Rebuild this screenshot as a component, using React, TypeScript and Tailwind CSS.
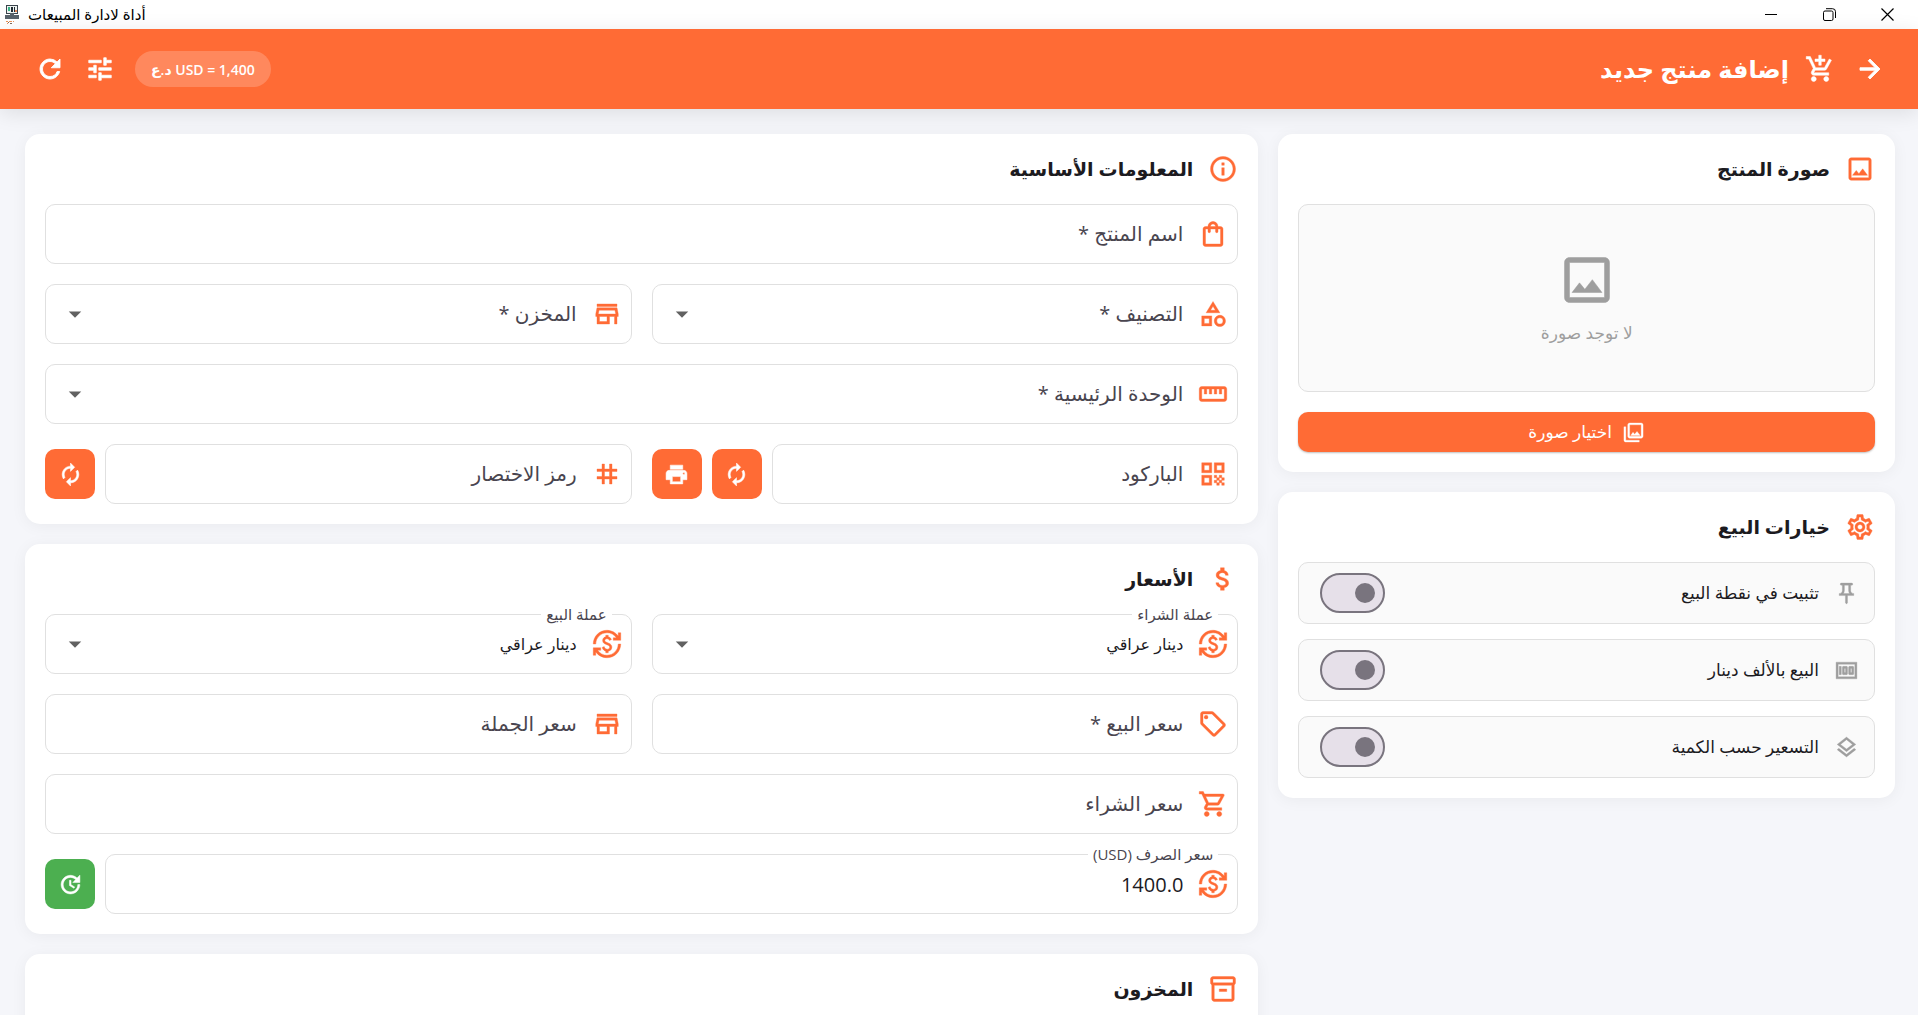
import type { ReactNode } from 'react';
import type { IconType } from 'react-icons';
import {
  MdAddShoppingCart,
  MdArrowDropDown,
  MdArrowForward,
  MdAttachMoney,
  MdAutorenew,
  MdCurrencyExchange,
  MdMoney,
  MdOutlineCategory,
  MdOutlineImage,
  MdOutlineInfo,
  MdOutlineInventory2,
  MdOutlineLayers,
  MdOutlinePhotoLibrary,
  MdOutlinePushPin,
  MdOutlineSell,
  MdOutlineSettings,
  MdOutlineShoppingBag,
  MdOutlineShoppingCart,
  MdOutlineStore,
  MdOutlineStraighten,
  MdPrint,
  MdQrCode,
  MdRefresh,
  MdTag,
  MdTune,
  MdUpdate,
} from 'react-icons/md';

function TitleBar() {
  const button = 'flex h-full w-[58px] items-center justify-center hover:bg-gray-100';
  return (
    <div dir="ltr" className="flex h-[29px] shrink-0 items-center justify-between bg-white text-black">
      <div className="flex items-center gap-2 pl-1">
        <svg width="16" height="20" viewBox="0 0 16 20">
          <path d="M2 0h12v9H2z" fill="#3b444c" />
          <path d="M3 1h10v7H3z" fill="#eef3f1" />
          <path d="M4 2h2v4H4z" fill="#3cb489" />
          <path d="M7 2h2v5H7zM10 2h1v5h-1z" fill="#1f2b33" />
          <path d="M11 5h2v2h-2z" fill="#e98a5b" />
          <path d="M1 10h14v4H1zM6 8h4v2H6z" fill="#59636c" />
          <path d="M2 16h2v1H2zM5 16h3v1H5zM3 18h1v1H3zM9 16h1v1H9z" fill="#e9955b" />
          <path d="M4 17h1v1H4zM6 18h2v1H6z" fill="#7d6a5f" />
        </svg>
        <span dir="rtl" className="text-[15px]">أداة لادارة المبيعات</span>
      </div>
      <div className="flex h-full pr-[2px]">
        <button type="button" aria-label="تصغير" className={button}>
          <svg width="12" height="12" viewBox="0 0 12 12"><path d="M0 5.5h12" stroke="#000" /></svg>
        </button>
        <button type="button" aria-label="استعادة" className={button}>
          <svg width="13" height="13" viewBox="0 0 13 13" fill="none" stroke="#000">
            <rect x="0.5" y="3" width="9.5" height="9.5" rx="1.5" />
            <path d="M3 .7h6.5a3 3 0 0 1 3 3V10" />
          </svg>
        </button>
        <button type="button" aria-label="إغلاق" className={button}>
          <svg width="13" height="13" viewBox="0 0 13 13"><path d="M.5.5l12 12M12.5.5l-12 12" stroke="#000" strokeWidth="1.2" /></svg>
        </button>
      </div>
    </div>
  );
}

function Header() {
  return (
    <header className="relative z-10 flex h-20 shrink-0 items-center justify-between bg-[#ff6b35] pr-[33px] pl-[35px] text-white shadow-[0_4px_20px_rgba(0,0,0,0.1)]">
      <div className="flex items-center">
        <button type="button" aria-label="رجوع" className="ml-5">
          <MdArrowForward size={30} strokeWidth={0.7} />
        </button>
        <MdAddShoppingCart size={30} strokeWidth={0.4} />
        <h1 className="mr-4 text-[24px] font-bold">إضافة منتج جديد</h1>
      </div>
      <div className="flex items-center gap-5">
        <span dir="ltr" className="flex h-9 items-center rounded-full bg-white/20 px-4 text-[14px] font-semibold">
          د.ع USD = 1,400
        </span>
        <button type="button" aria-label="الإعدادات"><MdTune size={30} strokeWidth={0.6} /></button>
        <button type="button" aria-label="تحديث"><MdRefresh size={30} strokeWidth={0.7} /></button>
      </div>
    </header>
  );
}

function Card({ icon: Icon, title, children }: { icon: IconType; title: string; children?: ReactNode }) {
  return (
    <section className="rounded-[15px] bg-white p-5 shadow-[0_2px_16px_rgba(0,0,0,0.05)]">
      <div className="mb-5 flex h-[30px] items-center gap-[15px]">
        <Icon size={30} strokeWidth={0.3} className="text-[#ff6b35]" />
        <h2 className="text-[19px] leading-[30px] font-bold text-[#1c1b1f]">{title}</h2>
      </div>
      {children}
    </section>
  );
}

type FieldProps = {
  id: string;
  icon: IconType;
  label: string;
  value?: string;
  select?: boolean;
};

function Field({ id, icon: Icon, label, value, select }: FieldProps) {
  const control = 'h-full min-w-0 flex-1 appearance-none bg-transparent text-[#1c1b1f] outline-none';
  return (
    <div className="relative flex h-[60px] min-w-0 flex-1 items-center rounded-[10px] border border-[#e0e0e0] bg-white pr-[9px] pl-[14px]">
      <Icon size={30} strokeWidth={0.3} className="ml-[15px] shrink-0 text-[#ff6b35]" />
      <label
        htmlFor={id}
        className={
          value
            ? 'absolute -top-[13px] right-[19px] bg-white px-[5px] text-[15px] leading-[24px] text-[#49454f]'
            : 'shrink-0 text-[20px] text-[#49454f]'
        }
      >
        {label}
      </label>
      {select ? (
        <>
          <select id={id} className={`${control} text-[16px]`} defaultValue={value ?? ''}>
            <option value={value ?? ''}>{value ?? ''}</option>
          </select>
          <MdArrowDropDown size={30} className="pointer-events-none shrink-0 text-[#616161]" />
        </>
      ) : (
        <input id={id} type="text" className={`${control} text-[20px]`} defaultValue={value} />
      )}
    </div>
  );
}

function SquareButton({ icon: Icon, label, green }: { icon: IconType; label: string; green?: boolean }) {
  return (
    <button
      type="button"
      aria-label={label}
      className={`flex size-[50px] shrink-0 items-center justify-center rounded-[10px] text-white ${green ? 'bg-[#4caf50]' : 'bg-[#ff6b35]'}`}
    >
      <Icon size={25} strokeWidth={0.5} />
    </button>
  );
}

function Option({ id, icon: Icon, label }: { id: string; icon: IconType; label: string }) {
  return (
    <div className="flex h-[62px] items-center rounded-[10px] border border-[#e0e0e0] bg-[#fafafa] pr-[15px] pl-[21px]">
      <Icon size={25} strokeWidth={0.3} className="ml-[15px] shrink-0 text-[#9e9e9e]" />
      <label htmlFor={id} className="flex-1 text-[17px] text-[#1c1b1f]">{label}</label>
      <input
        id={id}
        type="checkbox"
        role="switch"
        className="flex h-10 w-[65px] shrink-0 appearance-none items-center rounded-full border-2 border-[#79747e] bg-[#e6e0e9] px-2 before:size-5 before:rounded-full before:bg-[#79747e] checked:justify-end checked:border-[#ff6b35] checked:bg-[#ff6b35] checked:before:bg-white"
      />
    </div>
  );
}

function Sidebar() {
  return (
    <aside className="flex min-w-0 flex-1 flex-col gap-5">
      <Card icon={MdOutlineImage} title="صورة المنتج">
        <div className="flex h-[188px] flex-col items-center justify-center gap-[10px] rounded-[10px] border border-[#e0e0e0] bg-[#fafafa] text-[#9e9e9e]">
          <MdOutlineImage size={60} strokeWidth={0.2} />
          <p className="text-[17px] leading-[26px]">لا توجد صورة</p>
        </div>
        <button
          type="button"
          className="mt-5 flex h-10 w-full items-center justify-center gap-[10px] rounded-[10px] bg-[#ff6b35] text-[17px] text-white shadow-[0_1px_2px_rgba(0,0,0,0.25)]"
        >
          <MdOutlinePhotoLibrary size={23} strokeWidth={0.3} />
          اختيار صورة
        </button>
      </Card>
      <Card icon={MdOutlineSettings} title="خيارات البيع">
        <div className="flex flex-col gap-[15px]">
          <Option id="pin" icon={MdOutlinePushPin} label="تثبيت في نقطة البيع" />
          <Option id="thousand" icon={MdMoney} label="البيع بالألف دينار" />
          <Option id="tiers" icon={MdOutlineLayers} label="التسعير حسب الكمية" />
        </div>
      </Card>
    </aside>
  );
}

function ProductForm() {
  return (
    <form className="flex min-w-0 flex-2 flex-col gap-5">
      <Card icon={MdOutlineInfo} title="المعلومات الأساسية">
        <div className="flex flex-col gap-5">
          <div className="flex">
            <Field id="name" icon={MdOutlineShoppingBag} label="اسم المنتج *" />
          </div>
          <div className="grid grid-cols-2 gap-5">
            <Field id="category" icon={MdOutlineCategory} label="التصنيف *" select />
            <Field id="store" icon={MdOutlineStore} label="المخزن *" select />
          </div>
          <div className="flex">
            <Field id="unit" icon={MdOutlineStraighten} label="الوحدة الرئيسية *" select />
          </div>
          <div className="grid grid-cols-2 gap-5">
            <div className="flex items-center gap-[10px]">
              <Field id="barcode" icon={MdQrCode} label="الباركود" />
              <SquareButton icon={MdAutorenew} label="توليد باركود" />
              <SquareButton icon={MdPrint} label="طباعة الباركود" />
            </div>
            <div className="flex items-center gap-[10px]">
              <Field id="code" icon={MdTag} label="رمز الاختصار" />
              <SquareButton icon={MdAutorenew} label="توليد رمز" />
            </div>
          </div>
        </div>
      </Card>
      <Card icon={MdAttachMoney} title="الأسعار">
        <div className="flex flex-col gap-5">
          <div className="grid grid-cols-2 gap-5">
            <Field id="buy-currency" icon={MdCurrencyExchange} label="عملة الشراء" value="دينار عراقي" select />
            <Field id="sell-currency" icon={MdCurrencyExchange} label="عملة البيع" value="دينار عراقي" select />
          </div>
          <div className="grid grid-cols-2 gap-5">
            <Field id="sell-price" icon={MdOutlineSell} label="سعر البيع *" />
            <Field id="wholesale-price" icon={MdOutlineStore} label="سعر الجملة" />
          </div>
          <div className="flex">
            <Field id="buy-price" icon={MdOutlineShoppingCart} label="سعر الشراء" />
          </div>
          <div className="flex items-center gap-[10px]">
            <Field id="rate" icon={MdCurrencyExchange} label="سعر الصرف (USD)" value="1400.0" />
            <SquareButton icon={MdUpdate} label="تحديث سعر الصرف" green />
          </div>
        </div>
      </Card>
      <Card icon={MdOutlineInventory2} title="المخزون">
        <div className="h-20" />
      </Card>
    </form>
  );
}

export default function App() {
  return (
    // the icons carry an empty bounding path, which must not pick up the stroke
    <div dir="rtl" className="flex h-screen flex-col bg-[#f5f6fa] font-['Open_Sans','DejaVu_Sans',sans-serif] [&_path[fill=none]]:stroke-none [&_rect[fill=none]]:stroke-none">
      <TitleBar />
      <Header />
      <main className="flex min-h-0 flex-1 items-start gap-5 overflow-y-auto pt-[25px] pr-[23px] pb-[25px] pl-[25px] [scrollbar-width:none]">
        <Sidebar />
        <ProductForm />
      </main>
    </div>
  );
}
